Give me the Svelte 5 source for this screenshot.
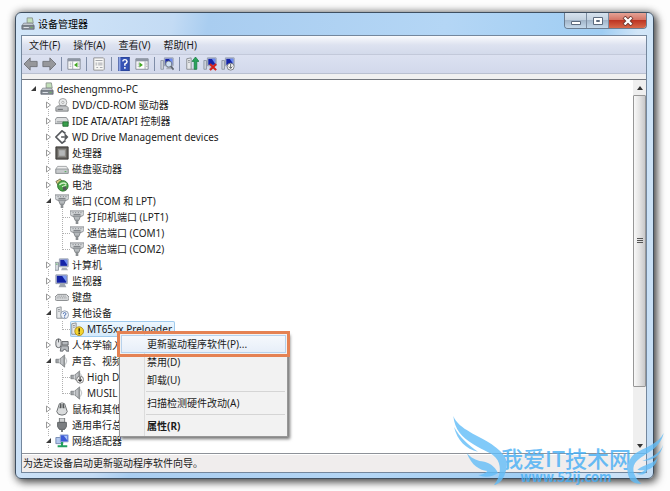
<script lang="ts">
    type Device = {
        name: string;
        icon: string;
        level: number;
        state?: "open" | "closed";
        last?: boolean;
        selected?: boolean;
    };

    const menus = ["文件(F)", "操作(A)", "查看(V)", "帮助(H)"];

    const tools = [
        { icon: "back", title: "后退" },
        { icon: "forward", title: "前进" },
        { icon: "sep", title: "" },
        { icon: "panel", title: "显示/隐藏控制台树" },
        { icon: "sep", title: "" },
        { icon: "props", title: "属性" },
        { icon: "sep", title: "" },
        { icon: "help", title: "帮助" },
        { icon: "action", title: "操作窗格" },
        { icon: "sep", title: "" },
        { icon: "scan", title: "扫描检测硬件改动" },
        { icon: "sep", title: "" },
        { icon: "update", title: "更新驱动程序软件" },
        { icon: "remove", title: "卸载" },
        { icon: "disable", title: "禁用" },
    ];

    const devices: Device[] = [
        { name: "deshengmmo-PC", icon: "pc", level: 0, state: "open" },
        { name: "DVD/CD-ROM 驱动器", icon: "dvd", level: 1, state: "closed" },
        { name: "IDE ATA/ATAPI 控制器", icon: "ide", level: 1, state: "closed" },
        { name: "WD Drive Management devices", icon: "wd", level: 1, state: "closed" },
        { name: "处理器", icon: "cpu", level: 1, state: "closed" },
        { name: "磁盘驱动器", icon: "disk", level: 1, state: "closed" },
        { name: "电池", icon: "battery", level: 1, state: "closed" },
        { name: "端口 (COM 和 LPT)", icon: "port", level: 1, state: "open" },
        { name: "打印机端口 (LPT1)", icon: "port", level: 2 },
        { name: "通信端口 (COM1)", icon: "port", level: 2 },
        { name: "通信端口 (COM2)", icon: "port", level: 2, last: true },
        { name: "计算机", icon: "computer", level: 1, state: "closed" },
        { name: "监视器", icon: "monitor", level: 1, state: "closed" },
        { name: "键盘", icon: "keyboard", level: 1, state: "closed" },
        { name: "其他设备", icon: "unknown", level: 1, state: "open" },
        { name: "MT65xx Preloader", icon: "warning", level: 2, last: true, selected: true },
        { name: "人体学输入", icon: "hid", level: 1, state: "closed" },
        { name: "声音、视频", icon: "sound", level: 1, state: "open" },
        { name: "High D", icon: "sounddown", level: 2 },
        { name: "MUSIL", icon: "sound", level: 2, last: true },
        { name: "鼠标和其他", icon: "mouse", level: 1, state: "closed" },
        { name: "通用串行总", icon: "usb", level: 1, state: "closed" },
        { name: "网络适配器", icon: "network", level: 1, state: "open" },
    ];

    const actions = [
        { name: "更新驱动程序软件(P)...", hot: true },
        { name: "禁用(D)" },
        { name: "卸载(U)" },
        { name: "" },
        { name: "扫描检测硬件改动(A)" },
        { name: "" },
        { name: "属性(R)", bold: true },
    ];
</script>

{#snippet screen()}
    <path d="M5 1h10v9H5z" fill="#d5dbe6" stroke="#8d97a8" />
    <path d="M6 2h8v7H6z" fill="#1424a8" />
    <path d="M10 2h4v6z" fill="#6d8cf0" />
    <path d="M8 11h5l2 3H7z" fill="#a9afb8" />
{/snippet}

{#snippet speaker()}
    <path d="M1 6h4l6-5v14l-6-5H1z" fill="#a2a5a8" stroke="#6d7174" stroke-width=".8" />
    <path d="M5 6v4M8 4v8" stroke="#e4e6e8" />
    <path d="M12 4q3 4 0 8" fill="none" stroke="#b4b8bc" />
{/snippet}

{#snippet tower()}
    <path d="M2 2l5-1v13H2z" fill="#e6e8ea" stroke="#85898e" />
    <path d="M3.500 4h2M3.500 6h2" stroke="#85898e" />
    <path d="M7 14h6" stroke="#85898e" />
{/snippet}

{#snippet icon(name: string)}
    <svg class="icon" viewBox="0 0 16 16" aria-hidden="true">
        {#if name === "back" || name === "forward"}
            <path
                d={name === "back" ? "M0 8l7-7v4h8v6H7v4z" : "M16 8L9 1v4H1v6h8v4z"}
                fill="#96979b"
                stroke="#6e7076"
            />
        {:else if name === "panel" || name === "action"}
            <path d="M1 2h14v12H1z" fill="#fff" stroke="#7d848f" />
            <path d="M1 2h14v3H1z" fill="#8e96a4" />
            <path d="M3 7h2M3 9h2M3 11h2M12.500 7h2M12.500 9h2M12.500 11h2" stroke="#a9adb3" />
            <path d={name === "panel" ? "M6.500 5v9" : "M11.500 5v9"} stroke="#9da3ad" />
            <path d={name === "panel" ? "M12 6v6L8 9z" : "M5 6v6l4-3z"} fill="#42a823" />
        {:else if name === "props"}
            <path d="M2 1h11l1 1v12l-1 1H2z" fill="#f7f7f5" stroke="#898a8c" />
            <path d="M4 4h8M4 7h2M7 7h5M4 9h2M7 9h5M5 12h2M9 12h3" stroke="#9b9ea5" />
        {:else if name === "help"}
            <path d="M2 0h12v16H2z" fill="#3553b5" stroke="#213784" />
            <path d="M2 0h2v16H2z" fill="#8ba3e4" />
            <path d="M6.500 5q.5-2 2.500-2t2.500 2q0 1.500-2.500 3v2M9 11.500v2" fill="none" stroke="#fff" stroke-width="1.700" />
        {:else if name === "scan" || name === "remove" || name === "disable"}
            <path d="M1 4h3v10H1z" fill="#cbd0d8" stroke="#8c95a4" />
            {@render screen()}
            {#if name === "scan"}
                <circle cx="10" cy="8" r="3.500" fill="#cde0f2" stroke="#6a7480" />
                <path d="M12.500 10.500l3 4" stroke="#606670" stroke-width="2" />
            {:else if name === "remove"}
                <path d="M8 8l7 7M15 8l-7 7" stroke="#d6201c" stroke-width="2.400" />
            {:else}
                <circle cx="11" cy="11" r="4" fill="#f2f2f2" stroke="#75797f" />
                <path d="M11 8v5M9 11l2 2 2-2" fill="none" stroke="#55595f" />
            {/if}
        {:else if name === "update"}
            {@render tower()}
            <path d="M12 0l4 5h-2.500v9h-3V5H8z" fill="#29a35a" stroke="#137a3c" stroke-width=".8" />
        {:else if name === "pc"}
            <path d="M7 1h6l1 6H7z" fill="#c2dfb9" stroke="#8a938c" />
            <path d="M3 7h10l2 3H1z" fill="#c3c8ce" stroke="#777d85" stroke-width=".8" />
            <path d="M1 10h14v4H1z" fill="#858c95" stroke="#596069" stroke-width=".8" />
            <path d="M3 12h6" stroke="#e8ecf1" />
            <path d="M11 12h2" stroke="#6ac155" />
        {:else if name === "dvd"}
            <circle cx="9" cy="5" r="4.500" fill="#e8eaeb" stroke="#999" />
            <circle cx="9" cy="5" r="1.300" fill="#fff" stroke="#888" stroke-width=".7" />
            <path d="M3 9h10l2 2v4H1v-4z" fill="#c2c4c6" stroke="#777a7d" />
            <path d="M3 13h6" stroke="#606468" />
        {:else if name === "ide"}
            <path d="M2 4h11l2 3v4H0V7z" fill="#dcdedf" stroke="#85888b" />
            <path d="M2 9h7" stroke="#7e8386" />
            <path d="M9 9h6v5H9z" fill="#39a04c" stroke="#236a31" />
        {:else if name === "wd"}
            <path d="M12 4L8 1 1 8l7 7 4-3M7 8h7M11 5l3 3-3 3" fill="none" stroke="#55585c" stroke-width="1.900" />
        {:else if name === "cpu"}
            <path d="M1 1h14v14H1z" fill="#62605c" stroke="#36322e" />
            <path d="M4 4h8v8H4z" fill="#b5b7b8" stroke="#8d8a86" stroke-width="1.500" />
        {:else if name === "disk"}
            <path d="M3 5h10l2 3v5H1V8z" fill="#eceded" stroke="#9b9ea0" />
            <path d="M1 8h14v5H1z" fill="#c7cacc" stroke="#909396" />
            <path d="M11 11h2" stroke="#42a54a" />
        {:else if name === "battery"}
            <path d="M1 4l5-3 3 4-5 4z" fill="#d6c980" stroke="#6d694e" />
            <circle cx="9" cy="9" r="6" fill="#4aa647" stroke="#28722b" />
            <path d="M5 8q4-4 8-1M8 10l5-2" fill="none" stroke="#d3efc9" stroke-width="1.500" />
            <path d="M9 10v4h4v-4" fill="#55585a" />
        {:else if name === "port"}
            <path d="M0 1h16v4l-2 2H2L0 5z" fill="#d3d6d8" stroke="#818589" />
            <path d="M3 3h1M6 3h1M9 3h1M12 3h1M4 5h8" stroke="#686d71" />
            <path d="M4 7h8l-2 5H6z" fill="#b5b9bc" stroke="#7c8084" />
            <path d="M8 11v5" stroke="#8a8e91" stroke-width="3" />
        {:else if name === "computer"}
            <path d="M0 5h4v9H0z" fill="#d5d9df" stroke="#8b939e" />
            <path d="M1 7h2" stroke="#49a84b" />
            {@render screen()}
        {:else if name === "monitor"}
            <path d="M1 1h13v10H1z" fill="#d8dde6" stroke="#8994a4" />
            <path d="M2 2h11v8H2z" fill="#1222a4" />
            <path d="M8 2h5v7z" fill="#7c9bf3" />
            <path d="M6 11h5l2 4H4z" fill="#9fa6af" />
        {:else if name === "keyboard"}
            <path d="M3 5h10l3 3v3l-2 1H2l-2-1V8z" fill="#d5d7d9" stroke="#808386" />
            <path d="M3 7h10M2 9h12" stroke="#85888b" stroke-dasharray="1 1" />
        {:else if name === "unknown" || name === "warning"}
            {@render tower()}
            {#if name === "unknown"}
                <circle cx="11" cy="10" r="4.500" fill="#eef2f8" stroke="#8c98aa" />
                <path d="M9.500 9q0-1.500 1.500-1.500T12.500 9 11 10.500v1M11 12v1.500" fill="none" stroke="#4066ae" />
            {:else}
                <circle cx="10.500" cy="10.500" r="5" fill="#f3d531" stroke="#b08a12" />
                <path d="M10.500 7v4M10.500 12v2" stroke="#2d2609" stroke-width="1.600" />
            {/if}
        {:else if name === "hid"}
            <rect x="1" y="1" width="6" height="10" rx="3" fill="#e0e2e4" stroke="#55585c" />
            <path d="M4 1v4" stroke="#55585c" />
            <path d="M8 4h7v4H8zM7 9h8l1 6h-3l-1-2h-2l-1 2H6z" fill="#b6babe" stroke="#606468" />
        {:else if name === "sound"}
            {@render speaker()}
        {:else if name === "sounddown"}
            {@render speaker()}
            <circle cx="11.500" cy="11" r="4" fill="#f4f4f4" stroke="#777" />
            <path d="M11.500 8v5M9.500 11l2 2 2-2" fill="none" stroke="#222" stroke-width="1.200" />
        {:else if name === "mouse"}
            <path d="M5 2q3-2 6 0l3 9q-1 4-6 4t-6-4z" fill="#dadcdd" stroke="#5f6265" />
            <path d="M6 2h4l1 5H5z" fill="#55585a" />
            <path d="M8 1v7" stroke="#eceded" />
        {:else if name === "usb"}
            <path d="M5 0h6v5H5z" fill="#d1d3d4" stroke="#6d7072" />
            <path d="M3 5h10v5l-2 3H5l-2-3z" fill="#7b7e81" stroke="#56595b" />
            <path d="M8 13v3" stroke="#6a6d70" stroke-width="2" />
        {:else if name === "network"}
            <path d="M1 4h8v7H1z" fill="#b3c8ef" stroke="#6f83ab" />
            <path d="M6 1h9v8H6z" fill="#3b59d6" stroke="#9db0d6" />
            <path d="M10 2h4v5z" fill="#a9c3fa" />
            <path d="M8 9v4M3 14h11" stroke="#22a05f" stroke-width="2.400" />
        {/if}
    </svg>
{/snippet}

<main class="stage">
    <section class="window">
        <header class="titlebar">
            {@render icon("pc")}
            <h1>设备管理器</h1>
            <div class="controls">
                <button class="control" aria-label="最小化">
                    <svg viewBox="0 0 12 10"><path d="M1.500 5.500h9v3h-9z" fill="#fff" stroke="#5c6b7e" /></svg>
                </button>
                <button class="control" aria-label="最大化">
                    <svg viewBox="0 0 12 10"><path d="M1.500 1.500h9v7h-9zM4.500 4.500h3v1h-3z" fill="#fff" stroke="#5c6b7e" /></svg>
                </button>
                <button class="control close" aria-label="关闭">
                    <svg viewBox="0 0 12 10">
                        <path d="M2 1l8 8M10 1L2 9" stroke="#6d352e" stroke-width="4" />
                        <path d="M2.500 1.500l7 7M9.500 1.500l-7 7" stroke="#fff" stroke-width="2.400" />
                    </svg>
                </button>
            </div>
        </header>

        <div class="body">
            <nav class="menubar">
                {#each menus as menu}
                    <button>{menu}</button>
                {/each}
            </nav>

            <div class="toolbar">
                {#each tools as tool}
                    {#if tool.icon === "sep"}
                        <span class="sep"></span>
                    {:else}
                        <button aria-label={tool.title}>{@render icon(tool.icon)}</button>
                    {/if}
                {/each}
            </div>

            <div class="view">
                <ul class="tree">
                    {#each devices as device}
                        <li class="row">
                            {#if device.level > 0}<span class="indent"></span>{/if}
                            {#if device.level > 1}<span class="indent guide"></span>{/if}
                            <span class="branch" class:guide={device.level > 0} class:leaf={device.level > 1} class:last={device.last}>
                                {#if device.state}
                                    <svg viewBox="0 0 7 8">
                                        {#if device.state === "open"}
                                            <path d="M6 1v5H1z" fill="#3a3a3a" />
                                        {:else}
                                            <path d="M1.500 1l4 3-4 3z" fill="#fff" stroke="#9a9a9a" />
                                        {/if}
                                    </svg>
                                {/if}
                            </span>
                            <span class="item" class:selected={device.selected}>
                                {@render icon(device.icon)}
                                <span>{device.name}</span>
                            </span>
                        </li>
                    {/each}
                </ul>
                <div class="scrollbar">
                    <button aria-label="向上滚动"><svg viewBox="0 0 8 6"><path d="M1 5l3-4 3 4z" fill="#333" /></svg></button>
                    <div class="track">
                        <div class="thumb"><i></i><i></i><i></i></div>
                    </div>
                    <button aria-label="向下滚动"><svg viewBox="0 0 8 6"><path d="M1 1l3 4 3-4z" fill="#333" /></svg></button>
                </div>
            </div>

            <footer class="status">为选定设备启动更新驱动程序软件向导。</footer>
        </div>
    </section>

    <div class="context" role="menu">
        {#each actions as action}
            {#if action.name}
                <button role="menuitem" class:hot={action.hot} class:bold={action.bold}>{action.name}</button>
            {:else}
                <hr />
            {/if}
        {/each}
    </div>

    <div class="watermark">
        <svg viewBox="0 0 720 273" aria-hidden="true">
            <path d="M70 45C85 85 150 105 185 130C225 158 240 180 226 215C218 240 205 250 192 252C212 226 214 200 203 178C190 155 160 150 130 130C95 108 74 85 70 45z" />
            <path d="M72 78C82 118 108 145 144 152C115 132 90 110 72 78z" />
            <path d="M110 155C125 195 150 207 172 210C165 218 155 222 145 222C165 232 190 226 204 216C194 195 176 184 155 181C138 178 122 170 110 155z" />
            <path d="M701 96C685 130 640 140 612 160C590 180 586 215 602 238C612 247 625 250 634 248C612 230 604 205 615 187C632 160 690 150 701 96z" />
            <path d="M699 132C690 160 660 170 637 180C665 180 694 165 699 132z" />
            <path d="M683 168C672 190 645 188 622 206C630 208 638 208 644 207C636 215 625 219 614 217C640 226 648 217 652 206C668 202 680 190 683 168z" />
        </svg>
        <p class="mark">我爱IT技术网</p>
        <p class="site">www.52ij.com</p>
    </div>
</main>

<style>
    :global(body) {
        margin: 0;
        background: #fdfdfd;
    }

    .stage {
        position: relative;
        overflow: hidden;
        padding: 12px 16px 13px 15px;
        font-family: "Noto Sans", "Noto Sans CJK SC", sans-serif;
        font-size: 10px;
        line-height: 16px;
        color: #1c1c1c;
    }

    button {
        margin: 0;
        padding: 0;
        border: 0;
        background: none;
        font: inherit;
        color: inherit;
    }

    svg {
        display: block;
    }

    .icon {
        flex: none;
        width: 14px;
        height: 14px;
    }

    .window {
        border: 1px solid #3f4f60;
        border-radius: 6px;
        padding: 0 6px 5px 5px;
        background: linear-gradient(100deg, #d3e6f8 0%, #c3dbf4 22%, #a9cdf0 27%, #b4d6f5 60%, #9fcdf3 82%, #d2e6f8 87%, #c3dcf4 100%);
        box-shadow: 0 0 8px rgba(0, 0, 0, 0.45), 3px 3px 9px rgba(0, 0, 0, 0.6);
    }

    .titlebar {
        display: flex;
        align-items: center;
        gap: 3px;
        height: 22px;
    }

    h1 {
        flex: 1;
        margin: 0;
        font-size: 10px;
        font-weight: 400;
        color: #000;
    }

    .controls {
        display: flex;
        align-self: flex-start;
        height: 15px;
        border: 1px solid #6a7c90;
        border-top: 0;
        border-radius: 0 0 4px 4px;
        overflow: hidden;
    }

    .control {
        display: grid;
        place-items: center;
        width: 22px;
        border-right: 1px solid #7b8ca0;
        background: linear-gradient(#d6e2ee 0%, #c2d0de 48%, #a3b6ca 50%, #c4d8ea 100%);
    }

    .control svg {
        width: 12px;
        height: 10px;
    }

    .control.close {
        width: 37px;
        border-right: 0;
        background: linear-gradient(#e5a396 0%, #d37263 48%, #bd3523 50%, #d8694a 100%);
    }

    .body {
        border: 1px solid #74879d;
        background: #f0f0f0;
    }

    .menubar {
        display: flex;
        gap: 13px;
        padding: 1px 7px;
        border-bottom: 1px solid #c3c9da;
        background: linear-gradient(#fafbfd, #dde2f0 50%, #d3daeb);
    }

    .toolbar {
        display: flex;
        align-items: center;
        height: 18px;
        border-bottom: 1px solid #b9c0d0;
        background: linear-gradient(#dce1f1, #d2d8eb);
    }

    .toolbar button {
        display: grid;
        place-items: center;
        width: 18px;
        height: 18px;
    }

    .sep {
        width: 1px;
        height: 14px;
        margin: 0 3px;
        background: #7f8da8;
    }

    .view {
        display: flex;
        margin-top: 5px;
        border-top: 1px solid #73777e;
        border-bottom: 1px solid #8e9299;
        background: #fff;
    }

    .tree {
        flex: 1;
        min-width: 0;
        margin: 0;
        padding: 1px 0 4px 5px;
        list-style: none;
        overflow: hidden;
    }

    .row {
        display: flex;
        height: 16px;
    }

    .indent {
        flex: none;
        width: 15px;
    }

    .branch {
        display: grid;
        place-items: center;
        flex: none;
        width: 13px;
    }

    .guide {
        background: repeating-linear-gradient(#b0b0b0 0 1px, transparent 1px 2px) 6px 0 / 1px 100% no-repeat;
    }

    .branch.leaf {
        background:
            repeating-linear-gradient(#b0b0b0 0 1px, transparent 1px 2px) 5px 0 / 1px 100% no-repeat,
            repeating-linear-gradient(90deg, #b0b0b0 0 1px, transparent 1px 2px) 6px 8px / 7px 1px no-repeat;
    }

    .branch.last {
        background-size: 1px 9px, 7px 1px;
    }

    .branch svg {
        width: 7px;
        height: 8px;
        background: #fff;
    }

    .item {
        display: flex;
        align-items: center;
        gap: 3px;
        white-space: nowrap;
    }

    .selected {
        padding-right: 3px;
        border-radius: 2px;
        background: linear-gradient(#eef7fe, #d2e9fb);
        box-shadow: inset 0 0 0 1px #9fcbee;
    }

    .scrollbar {
        display: flex;
        flex-direction: column;
        width: 13px;
        background: #efefef;
    }

    .scrollbar button {
        display: grid;
        place-items: center;
        height: 15px;
    }

    .scrollbar button svg {
        width: 8px;
        height: 6px;
    }

    .track {
        flex: 1;
    }

    .thumb {
        display: flex;
        flex-direction: column;
        align-items: center;
        justify-content: center;
        gap: 1px;
        box-sizing: border-box;
        height: 85%;
        border: 1px solid #979797;
        border-radius: 1px;
        background: linear-gradient(90deg, #f8f8f8, #e4e4e4 50%, #c8c8ca);
    }

    .thumb i {
        width: 6px;
        height: 1px;
        background: #555;
    }

    .status {
        padding: 0 1px 1px;
        border-top: 1px solid #fff;
        background: #f0eded;
    }

    .context {
        position: absolute;
        top: 333px;
        left: 119px;
        box-sizing: border-box;
        display: flex;
        flex-direction: column;
        width: 169px;
        padding: 1px;
        border: 1px solid #979797;
        background: linear-gradient(90deg, #f1f1f1 24px, #dcdcdc 24px, #dcdcdc 25px, #f2f2f2 25px);
        box-shadow: 2px 2px 3px rgba(0, 0, 0, 0.55);
    }

    .context button {
        position: relative;
        height: 18px;
        padding-left: 26px;
        text-align: left;
        line-height: 18px;
    }

    .context .hot {
        background: linear-gradient(#f6f9fd, #e6eef8);
        box-shadow: inset 0 0 0 1px #b7d2ec;
    }

    .context .hot::after {
        content: "";
        position: absolute;
        inset: -4px;
        border: 3px solid #e58253;
    }

    .context .bold {
        font-weight: 700;
    }

    hr {
        align-self: stretch;
        height: 1px;
        margin: 2px 1px 2px 25px;
        border: 0;
        background: #d5d5d5;
    }

    .watermark {
        position: absolute;
        right: 0;
        bottom: 0;
        box-sizing: border-box;
        width: 240px;
        height: 91px;
        padding: 43px 0 0 32px;
        color: #45aef5;
        opacity: 0.8;
        pointer-events: none;
    }

    .watermark svg {
        position: absolute;
        inset: 0;
        fill: #62bdf8;
    }

    .watermark p {
        margin: 0;
        text-align: center;
        font-family: "Noto Sans CJK SC", sans-serif;
        font-weight: 700;
    }

    .watermark .mark {
        font-size: 22px;
        font-weight: 500;
        line-height: 26px;
    }

    .watermark .site {
        font-size: 13px;
        line-height: 14px;
    }
</style>
